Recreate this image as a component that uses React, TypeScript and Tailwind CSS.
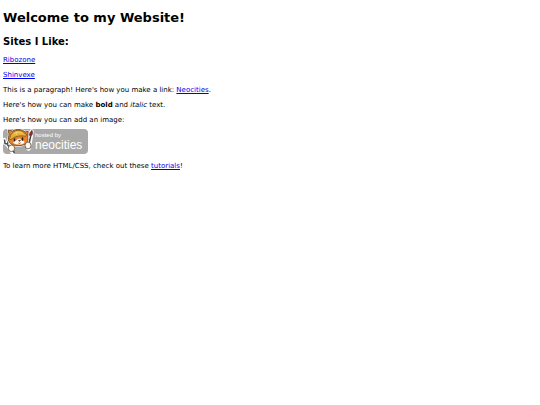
import React from 'react';

const sites = [
  { name: 'Ribozone', href: '#ribozone' },
  { name: 'Shinvexe', href: '#shinvexe' },
];

const TextLink: React.FC<{ href: string; children: React.ReactNode }> = ({ href, children }) => (
  <a href={href} className="text-[#0000ee] underline">{children}</a>
);

// Badge with the cat mascot holding a wrench and a paintbrush
const NeocitiesBadge: React.FC = () => (
  <svg width="85" height="25" viewBox="0 0 85 25" role="img" aria-label="Hosted by Neocities">
    <rect width="85" height="25" rx="4" fill="#a9a9a9" />
    {/* wrench */}
    <path d="M1.500 10.500l.5 4 2.500.5 1.500-3.500M4 15l5.500 9" fill="none" stroke="#fff" strokeWidth="3.600" strokeLinejoin="round" strokeLinecap="round" />
    <path d="M1.500 10.500l.5 4 2.500.5 1-3.500M4 15l3 4M10 21.500l1.500 2.500" fill="none" stroke="#4c4c4c" strokeWidth="1.500" />
    {/* brush */}
    <path d="M28.500 2.500l-1.300 8-1.700 9" fill="none" stroke="#fff" strokeWidth="4.400" strokeLinecap="round" />
    <path d="M27.700 7l-2 9" stroke="#4f3a31" strokeWidth="1.500" />
    <path d="M29 1.300c1.200 2.500.6 4.500-.9 5.800l-1.700-.5c-.1-2 .8-3.800 2.600-5.300z" fill="#9c2530" stroke="#4a1b20" strokeWidth=".5" />
    {/* head */}
    <path d="M5 1l4.500 1C13-.3 19-.2 22 3l3.200-.8-.5 6c1 5-2.200 7.800-6.700 8.200-5.500.8-10.500-.2-12.300-4.400C4.800 9.500 6 7 6 5z" fill="#fff" stroke="#fff" strokeWidth="2" strokeLinejoin="round" />
    <path d="M5 1l4.500 1C13-.3 19-.2 22 3l3.200-.8-.5 6c1 5-2.200 7.800-6.700 8.200-5.500.8-10.500-.2-12.300-4.400C4.800 9.500 6 7 6 5z" fill="#e9802b" stroke="#604022" strokeWidth=".8" />
    <path d="M14.500 10c-.5 1.500-2.500 1.700-3.800 2.700-.8.800-.3 1.500.4 1.900 3 1.500 7 1.200 9.500-.2 1.200-.8 1.300-1.900.1-2.400-1.800-.5-3-1-3.500-2.500z" fill="#fff8e9" />
    {/* helmet */}
    <path d="M7 8.700C7.500 1.500 17.500-1.500 22 4.500c2 .6 2 2.400.4 2.800-4.900-1-10-.3-14.400 3.200-2 .5-2.600-1-1-1.800z" fill="#e4b23a" stroke="#79521d" strokeWidth=".8" />
    <path d="M11 5c2.500-2 6-2.300 8.500-.4M13 2.300l.8 3.200" fill="none" stroke="#f7d66b" strokeWidth=".9" />
    <path d="M11.500 10v1.800M19.500 9v2" stroke="#2a1c18" strokeWidth="1.500" strokeLinecap="round" />
    <path d="M15.500 11.300h2l-1 1.200z" fill="#3f2525" stroke="#3f2525" strokeWidth=".5" />
    <path d="M14.800 13.600c1.200.5 2.200.4 3.200-.3-.2 1.700-2.500 2.100-3.200.3z" fill="#a83f3c" />
    {/* paws */}
    <ellipse cx="8.500" cy="19.300" rx="3.200" ry="3.300" fill="#fffaf0" stroke="#5f4938" strokeWidth=".8" />
    <ellipse cx="25" cy="16.500" rx="3" ry="3.400" fill="#fffaf0" stroke="#5f4938" strokeWidth=".8" />
    <text x="32" y="8" fill="#fff" fontSize="6" fontFamily="'Liberation Sans', sans-serif">hosted by</text>
    <text x="32" y="20" fill="#fff" fontSize="12" fontFamily="'Liberation Sans', sans-serif">neocities</text>
  </svg>
);

const App: React.FC = () => {
  return (
    <main className="px-[3px] pt-[9px] font-['DejaVu_Sans',sans-serif] text-[7px] leading-[8px] text-black">
      <h1 className="text-[13px] font-bold leading-[18px]">Welcome to my Website!</h1>
      <h2 className="mt-2 text-[10px] font-bold leading-[14px]">Sites I Like:</h2>

      <div className="mt-[7px] flex flex-col items-start gap-[7px]">
        {sites.map(site => (
          <p key={site.name}><TextLink href={site.href}>{site.name}</TextLink></p>
        ))}
        <p>This is a paragraph! Here's how you make a link: <TextLink href="https://neocities.org">Neocities</TextLink>.</p>
        <p>Here's how you can make <strong className="font-bold">bold</strong> and <em>italic</em> text.</p>
        <div className="space-y-[5px]">
          <p>Here's how you can add an image:</p>
          <NeocitiesBadge />
        </div>
        <p className="mt-px">To learn more HTML/CSS, check out these <TextLink href="https://neocities.org/tutorials">tutorials</TextLink>!</p>
      </div>
    </main>
  );
};

export default App;
